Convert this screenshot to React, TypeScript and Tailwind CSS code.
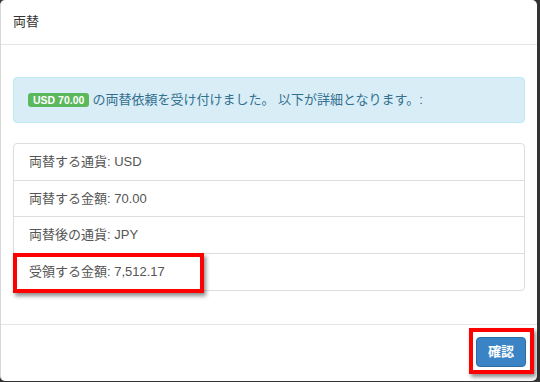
const font = { fontFamily: '"Liberation Sans", "Noto Sans CJK JP", sans-serif' }

const rows = [
  "両替する通貨: USD",
  "両替する金額: 70.00",
  "両替後の通貨: JPY",
  "受領する金額: 7,512.17",
]

export default function App() {
  return (
    <div className="w-[540px] h-[382px] bg-[#333] overflow-hidden" style={font}>
      <div className="relative w-[537px] h-[381px] bg-white rounded-[5px] border-l border-[#d8d8d8] flex flex-col">
        <div className="h-[45px] shrink-0 px-[12px] flex items-center border-b border-[#e5e5e5] text-[13px] text-[#333]">
          両替
        </div>

        <div className="px-[12px] pt-[32px] pb-[33px] border-b border-[#e5e5e5]">
          <div className="h-[46px] rounded-[4px] border border-[#bce8f1] bg-[#d9edf7] text-[#31708f] px-[14px] flex items-center text-[13px]">
            <span className="bg-[#5cb85c] text-white font-bold text-[10.5px] leading-none px-[5px] py-[2px] rounded-[3px] mr-[3px]">
              USD 70.00
            </span>
            の両替依頼を受け付けました。 以下が詳細となります。:
          </div>

          <div className="mt-[20px] border border-[#ddd] rounded-[4px]">
            {rows.map((r, i) => (
              <div
                key={r}
                className={
                  "h-[36.5px] px-[15px] flex items-center text-[13px] text-[#555] " +
                  (i < rows.length - 1 ? "border-b border-[#ddd]" : "")
                }
              >
                {r}
              </div>
            ))}
          </div>
        </div>

        <div className="flex-1 flex justify-end items-center pr-[11px] pb-[2px]">
          <button className="w-[50px] h-[30px] rounded-[4px] bg-[#3a84c5] border border-[#2e6da4] text-white text-[13px] font-bold">
            確認
          </button>
        </div>

        <div className="absolute left-[12px] top-[253px] w-[191px] h-[40px] border-[4px] border-[#f00] shadow-[2px_3px_4px_rgba(0,0,0,0.45)]" />
        <div className="absolute left-[468px] top-[328px] w-[65px] h-[46px] border-[4px] border-[#f00] shadow-[2px_3px_4px_rgba(0,0,0,0.45)]" />
      </div>
    </div>
  )
}
